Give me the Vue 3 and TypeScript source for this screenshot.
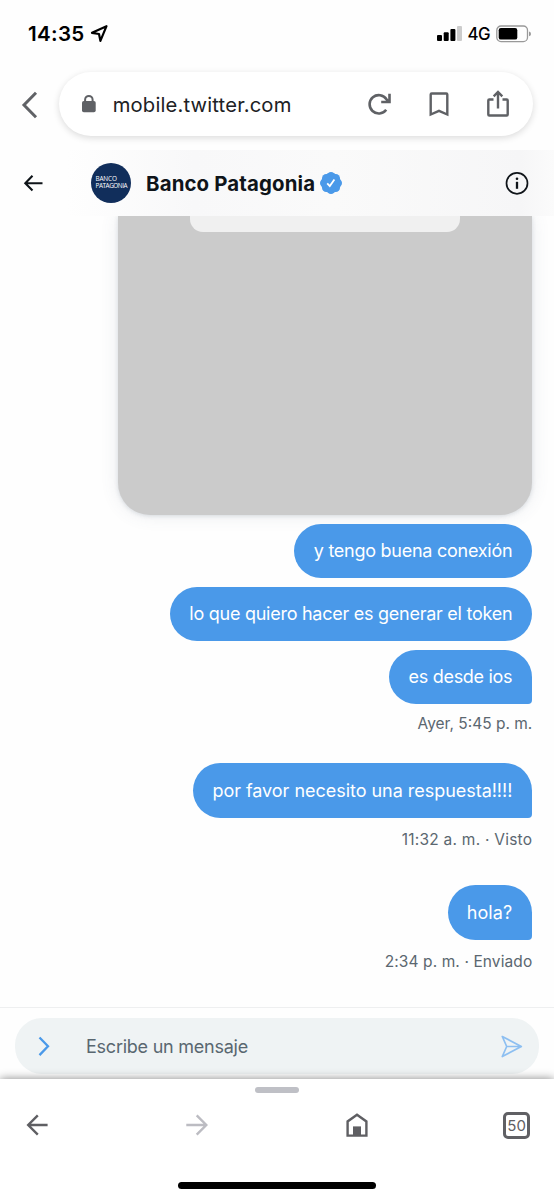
<script setup lang="ts">
interface Message {
  text: string
  tail: boolean
  name: string
  meta?: string
}

const messages: Message[] = [
  { text: 'y tengo buena conexión', tail: false, name: 'connection' },
  { text: 'lo que quiero hacer es generar el token', tail: false, name: 'token' },
  { text: 'es desde ios', tail: true, name: 'ios', meta: 'Ayer, 5:45 p. m.' },
  { text: 'por favor necesito una respuesta!!!!', tail: true, name: 'answer', meta: '11:32 a. m. · Visto' },
  { text: 'hola?', tail: true, name: 'hello', meta: '2:34 p. m. · Enviado' },
]
</script>

<template>
  <div class="phone">
    <div class="status">
      <span class="clock">14:35</span>
      <svg class="location" width="20" height="20" viewBox="0 0 20 20"><path d="M16.5 2.2 2 8.8l7 1.2 1.4 6.8Z" /></svg>
      <svg class="signal" width="26" height="18" viewBox="0 0 26 18">
        <rect x="0" y="10" width="5" height="6" rx="1" />
        <rect x="6.7" y="7.3" width="5" height="8.7" rx="1" />
        <rect x="13.4" y="4" width="5" height="12" rx="1" />
        <rect x="20" y="1" width="5" height="15" rx="1" class="faint" />
      </svg>
      <span class="network">4G</span>
      <svg class="battery" width="36" height="18" viewBox="0 0 36 18">
        <rect x=".8" y="1" width="30.7" height="15.6" rx="4.2" class="shell" />
        <rect x="2.7" y="3" width="18.6" height="11.6" rx="2.2" />
        <path d="M33 6.6q2 .5 2 2.3t-2 2.3Z" class="nub" />
      </svg>
    </div>

    <div class="browser">
      <svg class="chevron" width="18" height="28" viewBox="0 0 18 28"><path d="M15 1.8 3 14l12 12.2" /></svg>
      <div class="address">
        <svg class="lock" width="14" height="18" viewBox="0 0 14 18">
          <rect x="0" y="6" width="13.7" height="11.2" rx="1.8" class="solid" />
          <path d="M3.1 7V4.7a3.75 3.75 0 0 1 7.5 0V7" />
        </svg>
        <span class="url">mobile.twitter.com</span>
        <svg class="reload" width="24" height="24" viewBox="0 0 24 24">
          <path d="M18.2 17.8A9.2 9.2 0 1 1 18.5 7.3L20.5 10M21.5 1.7v8.3h-8.3" />
        </svg>
        <svg class="bookmark" width="20" height="24" viewBox="0 0 20 24"><path d="M2.7 1.5h14.6q1 0 1 1v20L10 18.8l-8.3 3.7v-20q0-1 1-1Z" /></svg>
        <svg class="share" width="24" height="28" viewBox="0 0 24 28">
          <path d="M7.5 9.5H3.3q-1 0-1 1v14q0 1 1 1h17.4q1 0 1-1v-14q0-1-1-1h-4.2M12 18.5V2M7.7 6.3 12 2l4.3 4.3" />
        </svg>
      </div>
    </div>

    <div class="chat">
      <header class="profile">
        <svg class="back" width="20" height="18" viewBox="0 0 20 18"><path d="M18.5 9.2H1.7M8.5 1.8 1.3 9.2l7.2 7.2" /></svg>
        <div class="avatar"><span>BANCO</span><span class="second">PATAGONIA</span></div>
        <span class="name">Banco Patagonia</span>
        <svg class="verified" width="24" height="24" viewBox="0 0 24 24">
          <g class="seal">
            <circle cx="12" cy="12" r="10" /><circle cx="12" cy="5.3" r="4.3" /><circle cx="16.7" cy="7.3" r="4.3" />
            <circle cx="18.7" cy="12" r="4.3" /><circle cx="16.7" cy="16.7" r="4.3" /><circle cx="12" cy="18.7" r="4.3" />
            <circle cx="7.3" cy="16.7" r="4.3" /><circle cx="5.3" cy="12" r="4.3" /><circle cx="7.3" cy="7.3" r="4.3" />
          </g>
          <path d="m8.2 12.4 2.6 2.7 4.6-6.5" />
        </svg>
        <svg class="info" width="24" height="24" viewBox="0 0 24 24">
          <circle cx="12" cy="12.3" r="10.5" />
          <path d="M12 10.8v7" /><circle cx="12" cy="7.7" r="1.3" class="dot" />
        </svg>
      </header>

      <div class="photo"><div class="panel"></div></div>

      <div v-for="message in messages" :key="message.name" class="entry" :class="message.name">
        <div class="bubble" :class="{ tail: message.tail }"><span>{{ message.text }}</span></div>
        <div v-if="message.meta" class="meta">{{ message.meta }}</div>
      </div>
    </div>

    <div class="composer">
      <div class="field">
        <svg class="expand" width="14" height="22" viewBox="0 0 14 22"><path d="m1.5 2.5 8.5 8.8-8.5 8.8" /></svg>
        <span class="placeholder">Escribe un mensaje</span>
        <svg class="send" width="24" height="24" viewBox="0 0 24 24"><path d="M2.3 2.5 21.3 12.5 2.3 22.5l4.4-10ZM6.7 12.5h14.6" /></svg>
      </div>
    </div>

    <footer class="toolbar">
      <div class="grip"></div>
      <nav class="actions">
        <svg width="28" height="28" viewBox="0 0 28 28"><path d="M24.6 14H5M14.8 4.4 5.2 14l9.6 9.6" /></svg>
        <svg class="disabled" width="28" height="28" viewBox="0 0 28 28"><path d="M3.3 14H23M13.7 4.4 23.3 14l-9.6 9.6" /></svg>
        <svg width="28" height="28" viewBox="0 0 28 28"><path d="M4.6 24.6V10.4L14 3.7l9.4 6.7v14.2Z" /><rect x="10" y="15.4" width="8" height="9" class="door" /></svg>
        <div class="tabs">50</div>
      </nav>
      <div class="home"></div>
    </footer>
  </div>
</template>

<style>
body { margin: 0; background: #fff; }
</style>

<style scoped>
* { box-sizing: border-box; }
.phone { width: 554px; height: 1200px; overflow: hidden; display: flex; flex-direction: column; background: #fefefe; color: #0f1419; font-family: Inter, "Liberation Sans", sans-serif; }
svg { flex: none; display: block; overflow: visible; fill: none; }
span { white-space: nowrap; }

.status { height: 66px; flex: none; display: flex; align-items: center; padding: 1px 0 0 28px; color: #000; }
.clock { width: 57.5px; font-size: 20.6px; font-weight: 600; letter-spacing: .3px; }
.location { margin-left: 4px; stroke: #000; stroke-width: 2.2; stroke-linejoin: round; }
.signal { margin-left: 327.5px; fill: #000; }
.faint { fill: #ccc; }
.network { width: 22px; margin-left: 4.5px; font-size: 16.8px; font-weight: 500; letter-spacing: -.6px; }
.battery { margin-left: 6.5px; fill: #000; }
.shell { fill: none; stroke: #999; stroke-width: 1.3; }
.nub { fill: #999; }

.browser { height: 84px; flex: none; display: flex; align-items: flex-start; padding-top: 6px; }
.chevron { margin: 18.5px 0 0 20.5px; stroke: #606266; stroke-width: 3; }
.address { width: 474px; height: 64px; margin-left: 20.5px; padding-left: 22.7px; border-radius: 32px; display: flex; align-items: center; background: #fff; box-shadow: 0 2px 7px rgba(0, 0, 0, .14); }
.address svg { stroke: #5f6165; stroke-width: 2.4; }
.address .lock { stroke-width: 2; }
.solid { fill: #5f6165; stroke: none; }
.url { width: 180px; margin-left: 17px; font-size: 20.2px; color: #202124; letter-spacing: .18px; }
.address .reload { margin-left: 75.8px; stroke-width: 2.6; }
.bookmark { margin-left: 36.5px; }
.share { margin-left: 37px; }

.chat { height: 857px; flex: none; display: flex; flex-direction: column; align-items: flex-end; padding-right: 21.7px; }
.profile { width: 554px; height: 66px; flex: none; margin-right: -21.7px; position: relative; z-index: 1; display: flex; align-items: center; background: linear-gradient(90deg, #fefefe 12%, #f8f8f9 35%, #fafafa 60%, #f6f6f7 94%, #fbfbfb); }
.back { margin-left: 24px; stroke: #0f1419; stroke-width: 2.1; }
.avatar { width: 40px; height: 40px; margin-left: 47px; border-radius: 50%; background: #112e5b; color: #fff; display: flex; flex-direction: column; align-items: flex-start; justify-content: center; padding-left: 4.5px; font-family: "Open Sans", sans-serif; font-size: 6.4px; line-height: 6.8px; letter-spacing: -.15px; }
.second { letter-spacing: -.45px; }
.name { width: 171px; margin-left: 15px; font-size: 20.4px; font-weight: 700; letter-spacing: .15px; }
.verified { margin-left: 2.3px; stroke: #fff; stroke-width: 1.8; }
.seal { fill: #4a99e9; stroke: none; }
.info { margin-left: 161.7px; stroke: #0f1419; stroke-width: 1.7; }
.info path { stroke-width: 2.3; }
.dot { fill: #0f1419; stroke: none; }

.photo { width: 414.3px; height: 299px; flex: none; border-radius: 0 0 32px 32px; background: #cbcbcb; box-shadow: 0 1px 4px rgba(60, 80, 100, .16), 0 0 18px rgba(80, 100, 120, .12); }
.panel { width: 270px; height: 15.5px; margin-left: 72px; border-radius: 0 0 13px 13px; background: #f0f0f0; }
.entry { display: flex; flex-direction: column; align-items: flex-end; padding-top: 8.3px; }
.connection { padding-top: 8.8px; }
.bubble { height: 54.7px; display: flex; align-items: center; justify-content: flex-end; padding: 0 20px 1px 0; border-radius: 27.4px; background: #4a99e9; color: #fff; font-size: 18px; }
.tail { border-bottom-right-radius: 4px; }
.connection .bubble { width: 238px; letter-spacing: -.26px; }
.token .bubble { width: 362.5px; letter-spacing: -.26px; }
.ios .bubble { width: 143.5px; letter-spacing: -.3px; }
.answer .bubble { width: 339.5px; letter-spacing: -.03px; }
.hello .bubble { width: 84.5px; letter-spacing: .1px; }
.meta { height: 20px; margin-top: 9.7px; font-size: 15.5px; line-height: 20px; color: #5b6770; white-space: nowrap; }
.answer { padding-top: 29.3px; }
.answer .meta, .hello .meta { margin-top: 12px; }
.answer .meta { letter-spacing: .24px; }
.hello .meta { letter-spacing: .1px; }
.hello { padding-top: 35.2px; }

.composer { height: 72px; flex: none; padding: 10px 15px 0; border-top: 1.5px solid #eeeff0; }
.field { height: 56px; border-radius: 27px; background: #eff3f4; display: flex; align-items: center; }
.expand { margin-left: 23px; stroke: #4a99e9; stroke-width: 2.3; }
.placeholder { width: 162px; margin-left: 34px; color: #596770; font-size: 18px; letter-spacing: -.24px; }
.send { margin-left: 252px; stroke: #8dbff1; stroke-width: 1.7; stroke-linejoin: round; }

.toolbar { height: 121px; flex: none; position: relative; display: flex; flex-direction: column; align-items: center; background: #fff; box-shadow: 0 0 9px rgba(0, 0, 0, .48); }
.grip { width: 44px; height: 6px; margin-top: 8px; border-radius: 3px; background: #bfc0c6; }
.actions { width: 507px; margin: 18px .8px 0 0; display: flex; justify-content: space-between; align-items: center; }
.actions svg { stroke: #5f5f63; stroke-width: 2.4; }
.actions .disabled { stroke: #bcbcc2; }
.actions .door { fill: #5f5f63; stroke: none; }
.tabs { width: 27px; height: 27px; border: 3px solid #606064; border-radius: 5px; display: flex; align-items: center; justify-content: center; color: #606064; font-size: 15px; }
.home { width: 198px; height: 7px; margin-top: 43px; border-radius: 4px; background: #000; }
</style>
